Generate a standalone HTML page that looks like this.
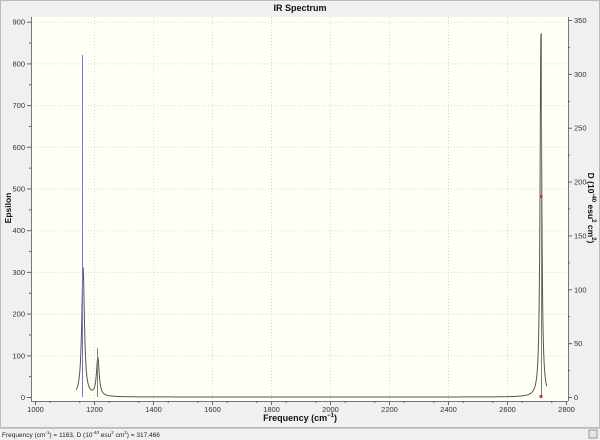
<!DOCTYPE html>
<html><head><meta charset="utf-8"><style>
html,body{margin:0;padding:0;width:600px;height:440px;overflow:hidden;background:#f0f0f0;font-family:"Liberation Sans",sans-serif}
</style></head><body>
<svg width="600" height="440" xmlns="http://www.w3.org/2000/svg" style="position:absolute;left:0;top:0">
<rect x="0" y="0" width="600" height="440" fill="#f0f0f0"/>
<rect x="0.5" y="0.5" width="599" height="427" fill="#f0f0f0" stroke="#bbb"/>
<line x1="0" y1="428.5" x2="600" y2="428.5" stroke="#c8c8c8"/>
<rect x="31" y="17" width="537" height="384" fill="#fffff5"/>
<g id="grid" stroke="#d8d8cc" stroke-dasharray="1,2" stroke-width="1"></g>
<path id="curve" fill="none" stroke="#555" stroke-width="1"/>
<g stroke="#7a7ab0" stroke-width="1">
<line x1="82.5" y1="397" x2="82.5" y2="55"/>
<line x1="97.5" y1="397" x2="97.5" y2="348"/>
<line x1="541.5" y1="397" x2="541.5" y2="33"/>
</g>
<rect x="539.5" y="195" width="3" height="3" fill="#e03030"/>
<rect x="539.5" y="395" width="3" height="3" fill="#e03030"/>
<g stroke="#777" stroke-width="1">
<line x1="31.5" y1="17" x2="31.5" y2="401"/>
<line x1="568.5" y1="17" x2="568.5" y2="401"/>
<line x1="31" y1="401.5" x2="568" y2="401.5"/>
</g>
<g id="ticks" stroke="#666" stroke-width="1"></g>
<g id="labels" font-size="7.5" fill="#333"></g>
<text x="300" y="11" font-size="9" font-weight="bold" text-anchor="middle" fill="#111">IR Spectrum</text>
<text x="300" y="421" font-size="9" font-weight="bold" text-anchor="middle" fill="#111">Frequency (cm<tspan font-size="6" dy="-4">−1</tspan><tspan dy="4">)</tspan></text>
<text transform="translate(11,208) rotate(-90)" font-size="8.5" font-weight="bold" text-anchor="middle" fill="#111">Epsilon</text>
<text transform="translate(588,208) rotate(90)" font-size="8.5" font-weight="bold" text-anchor="middle" fill="#111">D (10<tspan font-size="6" dy="-4">-40</tspan><tspan dy="4"> esu</tspan><tspan font-size="6" dy="-4">2</tspan><tspan dy="4"> cm</tspan><tspan font-size="6" dy="-4">2</tspan><tspan dy="4">)</tspan></text>
<text x="2" y="437" font-size="6.5" fill="#222">Frequency (cm<tspan font-size="4.5" dy="-3">-1</tspan><tspan dy="3">) = 1163, D (10</tspan><tspan font-size="4.5" dy="-3">-40</tspan><tspan dy="3"> esu</tspan><tspan font-size="4.5" dy="-3">2</tspan><tspan dy="3"> cm</tspan><tspan font-size="4.5" dy="-3">2</tspan><tspan dy="3">) = 317.466</tspan></text>
<rect x="589" y="430" width="8" height="8" fill="#e8e8d8" stroke="#999"/>
</svg>
<script>
var NS="http://www.w3.org/2000/svg";
function fx(f){return 35+(f-1000)*0.295;}
function fy(e){return 397-e*0.417;}
function el(p,t,a){var e=document.createElementNS(NS,t);for(var k in a)e.setAttribute(k,a[k]);p.appendChild(e);return e;}
var g=document.getElementById('grid'),t=document.getElementById('ticks'),l=document.getElementById('labels');
for(var f=1000;f<=2800;f+=200){var x=fx(f)+0.5;
 if(f>1000&&f<2800)el(g,'line',{x1:x,y1:17,x2:x,y2:401});
 el(t,'line',{x1:x,y1:401,x2:x,y2:405});
 var tx=el(l,'text',{x:x,y:412,'text-anchor':'middle'});tx.textContent=f;}
for(var f=1050;f<2800;f+=100){var x=fx(f)+0.5;el(t,'line',{x1:x,y1:401,x2:x,y2:403});}
for(var e=0;e<=900;e+=100){var y=fy(e)+0.5;
 if(e>0)el(g,'line',{x1:31,y1:y,x2:568,y2:y});
 el(t,'line',{x1:27,y1:y,x2:31,y2:y});
 var tx=el(l,'text',{x:25,y:y+2.5,'text-anchor':'end'});tx.textContent=e;}
for(var e=50;e<900;e+=100){var y=fy(e)+0.5;el(t,'line',{x1:29,y1:y,x2:31,y2:y});}
var s=377/350;
for(var d=0;d<=350;d+=50){var y=397-d*s+0.5;
 el(t,'line',{x1:568,y1:y,x2:572,y2:y});
 var tx=el(l,'text',{x:574,y:y+2.5});tx.textContent=d;}
for(var d=25;d<350;d+=50){var y=397-d*s+0.5;el(t,'line',{x1:568,y1:y,x2:570,y2:y});}
var pk=[[1163,310,5.5],[1213,92,5.5],[2715,870,3.5]],pts=[];
for(var f=1140;f<=2735;f+=0.5){var v=0;for(var i=0;i<3;i++){var q=(f-pk[i][0])/pk[i][2];v+=pk[i][1]/(1+q*q);}
 pts.push(fx(f).toFixed(2)+','+fy(v).toFixed(2));}
document.getElementById('curve').setAttribute('d','M'+pts.join('L'));
</script>
</body></html>
